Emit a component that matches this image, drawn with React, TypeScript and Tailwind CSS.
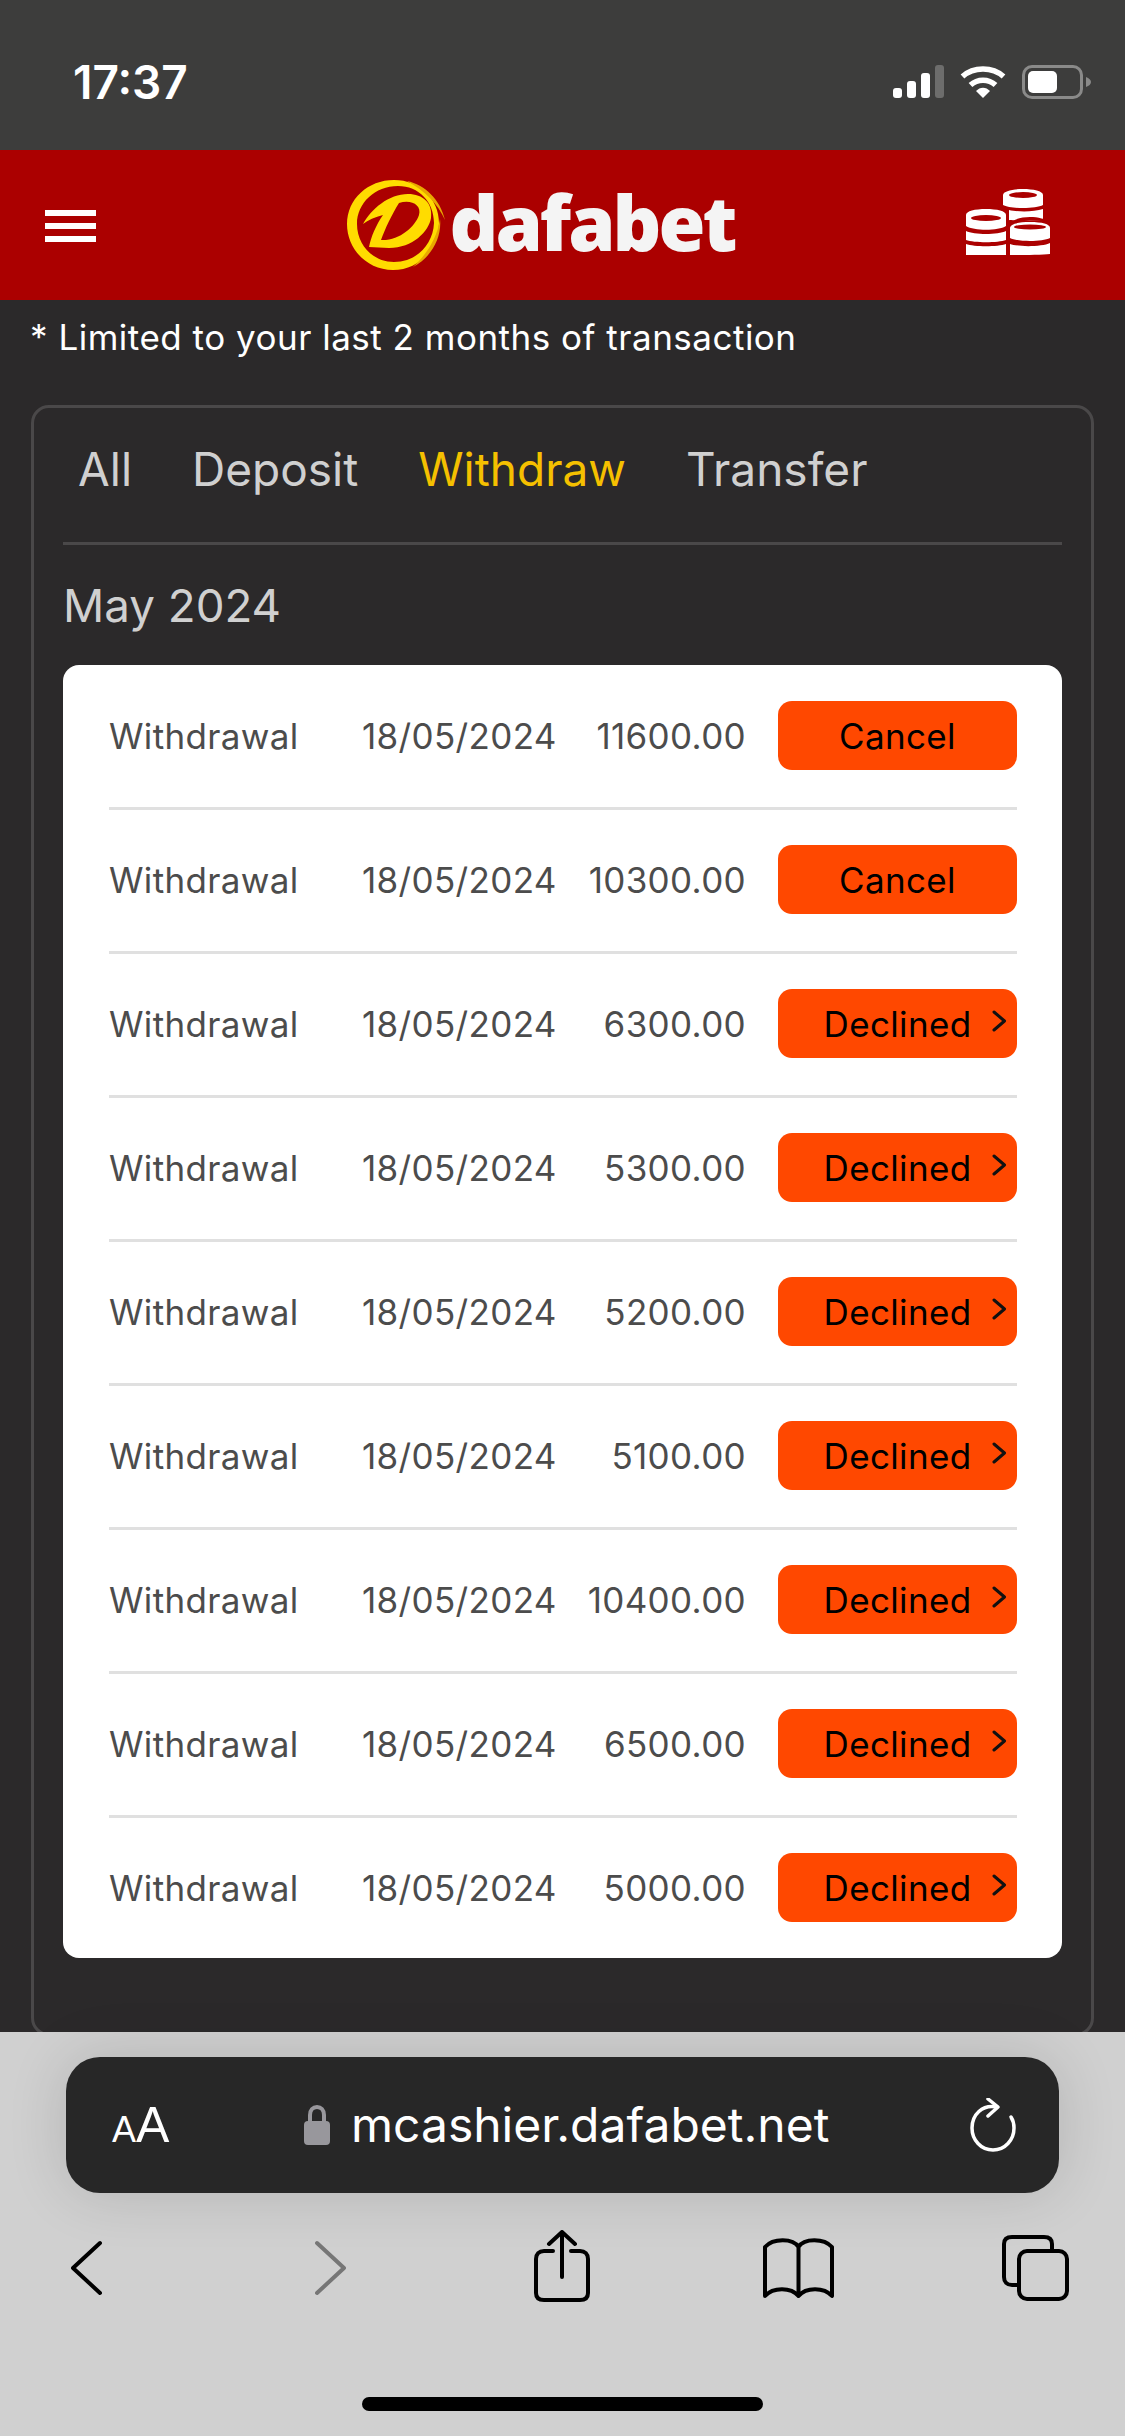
import React from "react";

const rows = [
  { amount: "11600.00", status: "Cancel" },
  { amount: "10300.00", status: "Cancel" },
  { amount: "6300.00", status: "Declined" },
  { amount: "5300.00", status: "Declined" },
  { amount: "5200.00", status: "Declined" },
  { amount: "5100.00", status: "Declined" },
  { amount: "10400.00", status: "Declined" },
  { amount: "6500.00", status: "Declined" },
  { amount: "5000.00", status: "Declined" },
];

function StatusIcons() {
  return (
    <div className="flex items-center">
      <svg width="51" height="34" viewBox="0 0 51 34" fill="none">
        <rect x="0" y="23" width="9" height="10" rx="3" fill="#fff" />
        <rect x="14" y="16" width="9" height="17" rx="3" fill="#fff" />
        <rect x="28" y="8" width="9" height="25" rx="3" fill="#fff" />
        <rect x="42" y="0" width="9" height="33" rx="3" fill="#6d6d6c" />
      </svg>
      <svg className="ml-[16px]" width="46" height="34" viewBox="0 0 46 34" fill="none">
        <path d="M2.5 11.5C13.5 1.5 32.5 1.5 43.5 11.5" stroke="#fff" strokeWidth="5.5" strokeLinecap="butt" />
        <path d="M10.5 20C17.5 13.5 28.5 13.5 35.5 20" stroke="#fff" strokeWidth="5.5" />
        <path d="M16 26C20 21.5 26 21.5 30 26L23 33Z" fill="#fff" />
      </svg>
      <svg className="ml-[16px]" width="69" height="34" viewBox="0 0 69 34" fill="none">
        <rect x="1.5" y="1.5" width="58" height="31" rx="8.5" stroke="#8a8a89" strokeWidth="3" />
        <rect x="6" y="6" width="29" height="22" rx="5" fill="#fff" />
        <path d="M64 12C67 13 69 15 69 17C69 19 67 21 64 22Z" fill="#8a8a89" />
      </svg>
    </div>
  );
}

function Logo() {
  return (
    <div className="flex items-center">
      <svg width="100" height="92" viewBox="0 0 100 92" fill="none">
        <path
          fillRule="evenodd"
          d="M47 1C73 1 92 20 92 44C92 70 72 91 46 91C20 91 0 70 0 45C0 20 21 1 47 1ZM51 7C28 7 10 24 10 45C10 66 26 83 47 83C69 83 86 66 87 44C87 23 72 7 51 7Z"
          fill="#ffdc00"
        />
        <path d="M60 2C78 6 93 20 98 41C91 25 78 12 60 2Z" fill="#e8a800" />
        <path d="M93 40C95 58 85 78 66 88C79 76 90 60 93 40Z" fill="#e8a800" />
        <path
          fillRule="evenodd"
          d="M16 45C24 30 42 15 61 15C76 15 86 24 84 39C82 52 66 69 42 69L22 68C24 58 29 46 36 36C28 38 21 41 16 45ZM52 24C45 35 38 50 34 61C52 62 68 48 72 36C75 26 64 20 52 24Z"
          fill="#ffdc00"
        />
      </svg>
      <span className="ml-[3px] pb-[6px] font-['Open_Sans','DejaVu_Sans',sans-serif] text-[76px] leading-[92px] font-extrabold tracking-[-3px] text-[#f4f4f4]">
        dafabet
      </span>
    </div>
  );
}

function Coins() {
  const white = "#fff";
  const red = "#ab0000";
  return (
    <svg width="84" height="67" viewBox="0 0 84 67" fill="none">
      <path d="M37 6C37 2 47 0 57 0C67 0 77 2 77 6V16C70 20 44 20 37 16Z" fill={white} />
      <ellipse cx="57" cy="6" rx="14" ry="3" fill={red} />
      <path d="M43 21C52 23 68 23 77 20V31C68 32 52 32 43 31Z" fill={white} />
      <path d="M0 26C0 22 9 20 20 20C31 20 40 22 40 26V37C32 42 8 42 0 37Z" fill={white} />
      <ellipse cx="20" cy="29" rx="15" ry="3" fill={red} />
      <path d="M0 42C8 46 32 46 40 42V51C32 54 8 54 0 51Z" fill={white} />
      <path d="M0 55C8 58 32 58 40 55V66H0Z" fill={white} />
      <path d="M44 39C44 35 52 33 64 33C76 33 84 35 84 39V49C76 53 52 53 44 49Z" fill={white} />
      <path d="M43 35C47 30 56 28 64 28C72 28 80 30 84 33C76 31 52 31 43 35Z" fill={red} />
      <ellipse cx="64" cy="38" rx="16" ry="2.5" fill={red} />
      <path d="M44 55C52 58 76 58 84 54V65C76 66 52 66 44 66Z" fill={white} />
    </svg>
  );
}

function Row({ amount, status, last }: { amount: string; status: string; last: boolean }) {
  return (
    <div className={`flex items-center pt-[35px] text-[35px] tracking-[0.35px] text-[#4c4c4c] ${last ? "pb-[36px]" : "border-b-[3px] border-[#e0e0e0] pb-[37px]"}`}>
      <span className="w-[253px] shrink-0 pt-[2px]">Withdrawal</span>
      <span className="w-[200px] shrink-0 pt-[2px]">18/05/2024</span>
      <span className="flex-1 pt-[2px] text-right">{amount}</span>
      <div className="relative ml-[32px] flex h-[69px] w-[239px] shrink-0 items-center justify-center rounded-[14px] bg-[#ff4800] pt-[2px] text-black">
        {status}
        {status === "Declined" && (
          <svg className="absolute right-[10px] top-[21px]" width="15" height="22" viewBox="0 0 15 22" fill="none">
            <path d="M2 2L12.5 11L2 20" stroke="#111" strokeWidth="3" strokeLinecap="round" strokeLinejoin="round" />
          </svg>
        )}
      </div>
    </div>
  );
}

function Toolbar() {
  return (
    <div className="mt-[37px] flex items-start pl-[71px]">
      <svg width="31" height="80" viewBox="0 0 31 80" fill="none">
        <path d="M29 13L2 38L29 63" stroke="#000" strokeWidth="4" strokeLinecap="round" strokeLinejoin="round" />
      </svg>
      <svg className="ml-[213px]" width="31" height="80" viewBox="0 0 31 80" fill="none">
        <path d="M2 13L29 38L2 63" stroke="#767676" strokeWidth="4" strokeLinecap="round" strokeLinejoin="round" />
      </svg>
      <svg className="ml-[188px]" width="56" height="80" viewBox="0 0 56 80" fill="none">
        <path d="M19 21H10C5 21 2 24 2 29V63C2 68 5 70 10 70H46C51 70 54 68 54 63V29C54 24 51 21 46 21H37" stroke="#000" strokeWidth="4" strokeLinecap="round" />
        <path d="M28 47V2M15 14L28 2L41 14" stroke="#000" strokeWidth="4" strokeLinecap="round" strokeLinejoin="round" />
      </svg>
      <svg className="ml-[173px]" width="71" height="80" viewBox="0 0 71 80" fill="none">
        <path d="M35.5 17C30 8 10 8 2 17V66C10 57 28 57 35.5 66C43 57 61 57 69 66V17C61 8 41 8 35.5 17ZM35.5 17V66" stroke="#000" strokeWidth="4" strokeLinejoin="round" strokeLinecap="round" />
      </svg>
      <svg className="ml-[168px]" width="67" height="80" viewBox="0 0 67 80" fill="none">
        <path d="M16 55H10C5 55 2 52 2 47V14C2 9 5 7 10 7H42C47 7 50 9 50 14V20" stroke="#000" strokeWidth="4" />
        <rect x="17" y="21" width="48" height="48" rx="8" stroke="#000" strokeWidth="4" />
      </svg>
    </div>
  );
}

export default function App() {
  return (
    <div className="flex h-[2436px] w-[1125px] flex-col overflow-hidden bg-[#2b292a] font-['Inter','Noto_Sans',sans-serif]">
      <div className="flex h-[150px] shrink-0 items-start justify-between bg-[#3d3d3c] pl-[73px] pr-[34px] pt-[65px]">
        <span className="text-[46px] leading-[34px] font-semibold text-white">17:37</span>
        <StatusIcons />
      </div>

      <header className="relative flex h-[150px] shrink-0 items-center justify-center bg-[#ab0000] pr-[44px]">
        <div className="absolute left-[45px] top-[60px] flex w-[51px] flex-col gap-[7px]">
          <div className="h-[6px] bg-white" />
          <div className="h-[6px] bg-white" />
          <div className="h-[6px] bg-white" />
        </div>
        <Logo />
        <div className="absolute left-[966px] top-[39px]">
          <Coins />
        </div>
      </header>

      <main className="flex min-h-0 flex-1 flex-col overflow-hidden px-[31px]">
        <p className="-ml-[1px] pt-[16px] text-[35px] leading-[42px] tracking-[0.5px] text-white">
          * Limited to your last 2 months of transaction
        </p>
        <section className="mt-[47px] h-[1631px] shrink-0 rounded-[18px] border-[3px] border-[#4a4849] px-[29px]">
          <nav className="flex h-[137px] items-center border-b-[3px] border-[#4a4849] pb-[11px] pl-[15px] text-[46px] text-[#d0d0d0]">
            <span>All</span>
            <span className="ml-[60px]">Deposit</span>
            <span className="ml-[60px] text-[#f5c000]">Withdraw</span>
            <span className="ml-[60px]">Transfer</span>
          </nav>
          <h2 className="pt-[35px] text-[45.7px] leading-[52px] font-normal text-[#d0d0d0]">May 2024</h2>
          <div className="mt-[33px] rounded-[16px] bg-white pl-[46px] pr-[45px] pt-[1px]">
            {rows.map((r, i) => (
              <Row key={i} amount={r.amount} status={r.status} last={i === rows.length - 1} />
            ))}
          </div>
        </section>
      </main>

      <footer className="h-[404px] shrink-0 bg-[#d0d0d0] pt-[25px]">
        <div className="mx-[66px] flex h-[136px] items-center rounded-[34px] bg-[#272727] text-white shadow-[0_0_60px_rgba(0,0,0,0.14)]">
          <span className="ml-[46px] flex w-[60px] shrink-0 items-baseline font-['Liberation_Sans',sans-serif]">
            <span className="text-[36px]">A</span>
            <span className="text-[50px]">A</span>
          </span>
          <svg className="ml-[131px]" width="28" height="40" viewBox="0 0 28 40" fill="none">
            <path d="M7 18V10C7 5 10 2 14 2C18 2 21 5 21 10V18" stroke="#98979c" strokeWidth="4" />
            <rect x="1" y="16" width="26" height="24" rx="4" fill="#98979c" />
          </svg>
          <span className="ml-[20px] w-[479px] shrink-0 text-[48px] leading-[60px] whitespace-nowrap">mcashier.dafabet.net</span>
          <svg className="ml-[140px]" width="46" height="54" viewBox="0 0 46 54" fill="none">
            <path d="M27 9C12 6 2 17 2 30C2 42 11 52 23 52C35 52 44 42 44 30C44 25 43 22 41 19" stroke="#fff" strokeWidth="3.5" strokeLinecap="round" />
            <path d="M18 1L28 9L18 18" stroke="#fff" strokeWidth="3.5" strokeLinecap="round" strokeLinejoin="round" />
          </svg>
        </div>
        <Toolbar />
        <div className="mx-auto mt-[87px] h-[14px] w-[401px] rounded-full bg-black" />
      </footer>
    </div>
  );
}
